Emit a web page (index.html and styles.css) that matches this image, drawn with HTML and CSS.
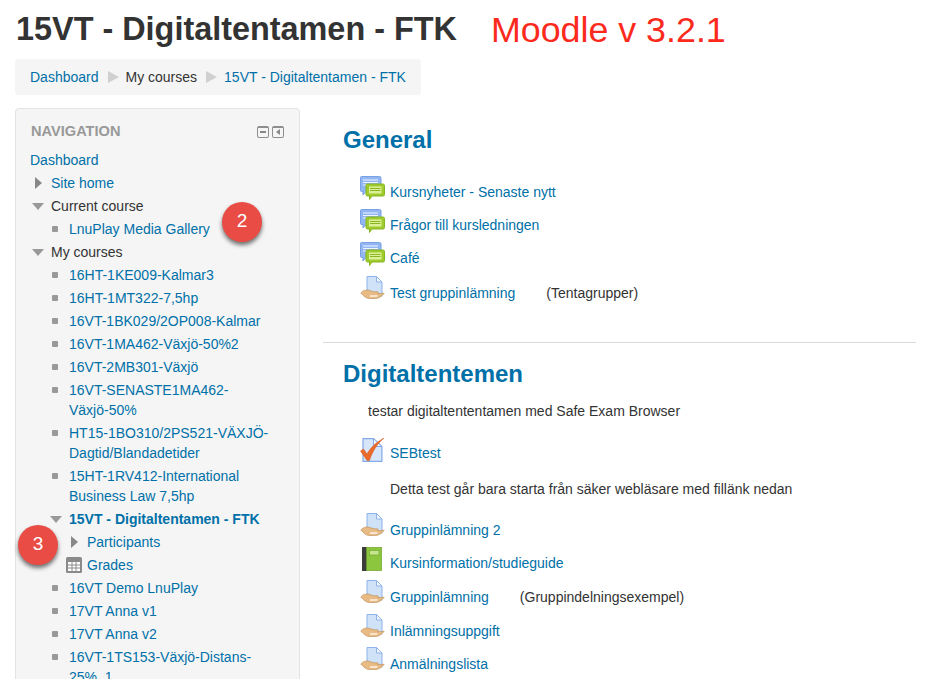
FILE: index.html
```html
<!DOCTYPE html>
<html lang="sv">
<head>
<meta charset="utf-8">
<title>15VT - Digitaltentamen - FTK</title>
<link rel="stylesheet" href="styles.css">
</head>
<body>
<svg class="defs" width="0" height="0" aria-hidden="true">
  <symbol id="i-forum" viewBox="0 0 25 24">
    <path d="M1.500.5h18a1.500 1.500 0 0 1 1.500 1.500v12a1.500 1.500 0 0 1-1.500 1.500H6l-3 3.500v-3.500H1.500A1 1 0 0 1 .5 14.500V1.500A1 1 0 0 1 1.500.5z" fill="#92b6f2" stroke="#7aa0e6"/>
    <path d="M3 4h15M3 6.500h15M3 9h15" stroke="#eef4ff" stroke-width="1.200"/>
    <path d="M7.500 8h15.500a1.500 1.500 0 0 1 1.500 1.500v9a1.500 1.500 0 0 1-1.500 1.500H12l-2.500 3.500V20h-2A1.500 1.500 0 0 1 6 18.500v-9A1.500 1.500 0 0 1 7.500 8z" fill="#9fcc2c" stroke="#86b522"/>
    <rect x="9" y="10.500" width="12.500" height="7" fill="#dcf09a"/>
    <path d="M10 12.500h10.500M10 14.500h10.500" stroke="#8ab51f"/>
  </symbol>
  <symbol id="i-assign" viewBox="0 0 24 24">
    <path d="M6.500.5H16l5.500 5.500v14h-15z" fill="#cfe2f8" stroke="#8fb2ea"/>
    <path d="M16 .5V6h5.500z" fill="#f4f8ff" stroke="#8fb2ea"/>
    <path d="M.3 17c2-2.500 5-3.500 8-2.800 2.500.6 4.500 1.600 6.500 1.600h2.200c.9 0 1 1.500.2 1.900 2.200 0 4.500-.3 6.500-.5-1.800 2.300-5 5.300-8.700 5.300H8.500c-2.800 0-5.600-2.700-8.200-5.500z" fill="#e8bb84" stroke="#bb8a50" stroke-width=".6"/>
    <path d="M9.500 20h7.500" stroke="#fff" stroke-width="1.200"/>
  </symbol>
  <symbol id="i-quiz" viewBox="0 0 24 24">
    <path d="M2.500.6H13l8.400 7.900v14.900H2.500z" fill="#d7e6fa" stroke="#83a9e6" stroke-width="1.200"/>
    <path d="M13 .6v7.900h8.400z" fill="#f2f7ff" stroke="#83a9e6"/>
    <path d="M0 13l3-2 3.500 5C10 9.500 15.500 4.500 23.500 0 17 5.500 12 13 9 22.500H6.500z" fill="#ea6a2a" stroke="#d9551a" stroke-width=".5"/>
  </symbol>
  <symbol id="i-book" viewBox="0 0 20 24">
    <rect x="0" y="0" width="5" height="24" fill="#3c3c38"/>
    <rect x="4.500" y=".3" width="15.200" height="23.400" fill="#8cc63f" stroke="#6f9e2c" stroke-width=".6"/>
    <rect x="7.500" y="3.500" width="9.500" height="4.500" fill="#c4e58a" stroke="#6f9e2c" stroke-width=".6"/>
  </symbol>
  <symbol id="i-grades" viewBox="0 0 16 16">
    <rect width="16" height="16" rx="1.500" fill="#8a8a8a"/>
    <path d="M2 5h12v9H2z" fill="#fff"/>
    <path d="M2 8h12M2 11h12M6 5v9M10 5v9" stroke="#8a8a8a"/>
  </symbol>
</svg>

<div class="page">
  <header class="page-head">
    <h1 class="page-title">15VT - Digitaltentamen - FTK</h1>
    <span class="version-note">Moodle v 3.2.1</span>
  </header>

  <nav class="breadcrumb">
    <a href="#">Dashboard</a><span class="crumb-sep"></span>
    <span>My courses</span><span class="crumb-sep"></span>
    <a href="#">15VT - Digitaltentamen - FTK</a>
  </nav>

  <div class="columns">
    <aside class="block">
      <div class="block-head">
        <h2 class="block-title">NAVIGATION</h2>
        <div class="block-tools">
          <span class="tool"><span class="tool-minus"></span></span>
          <span class="tool"><span class="tool-arrow"></span></span>
        </div>
      </div>
      <ul class="tree">
        <li class="row"><a href="#">Dashboard</a></li>
        <li class="row lvl1"><span class="tw closed"></span><a href="#">Site home</a></li>
        <li class="row lvl1"><span class="tw open"></span>Current course</li>
        <li class="row lvl2"><span class="dot"></span><a href="#">LnuPlay Media Gallery</a>
          <span class="badge badge-two">2</span></li>
        <li class="row lvl1"><span class="tw open"></span>My courses</li>
        <li class="row lvl2"><span class="dot"></span><a href="#">16HT-1KE009-Kalmar3</a></li>
        <li class="row lvl2"><span class="dot"></span><a href="#">16HT-1MT322-7,5hp</a></li>
        <li class="row lvl2"><span class="dot"></span><a href="#">16VT-1BK029/2OP008-Kalmar</a></li>
        <li class="row lvl2"><span class="dot"></span><a href="#">16VT-1MA462-Växjö-50%2</a></li>
        <li class="row lvl2"><span class="dot"></span><a href="#">16VT-2MB301-Växjö</a></li>
        <li class="row lvl2"><span class="dot"></span><a href="#">16VT-SENASTE1MA462-<br>Växjö-50%</a></li>
        <li class="row lvl2"><span class="dot"></span><a href="#">HT15-1BO310/2PS521-VÄXJÖ-<br>Dagtid/Blandadetider</a></li>
        <li class="row lvl2"><span class="dot"></span><a href="#">15HT-1RV412-International<br>Business Law 7,5hp</a></li>
        <li class="row lvl2 current"><span class="tw open"></span><a href="#">15VT - Digitaltentamen - FTK</a>
          <span class="badge badge-three">3</span></li>
        <li class="row lvl3"><span class="tw closed"></span><a href="#">Participants</a></li>
        <li class="row lvl3"><svg class="grade-icon"><use href="#i-grades"/></svg><a href="#">Grades</a></li>
        <li class="row lvl2"><span class="dot"></span><a href="#">16VT Demo LnuPlay</a></li>
        <li class="row lvl2"><span class="dot"></span><a href="#">17VT Anna v1</a></li>
        <li class="row lvl2"><span class="dot"></span><a href="#">17VT Anna v2</a></li>
        <li class="row lvl2"><span class="dot"></span><a href="#">16VT-1TS153-Växjö-Distans-<br>25%_1</a></li>
      </ul>
    </aside>

    <main class="content">
      <section class="topic topic-general">
        <h2 class="topic-title">General</h2>
        <ul class="activities">
          <li class="act h33"><svg class="act-icon"><use href="#i-forum"/></svg><a href="#">Kursnyheter - Senaste nytt</a></li>
          <li class="act h33"><svg class="act-icon"><use href="#i-forum"/></svg><a href="#">Frågor till kursledningen</a></li>
          <li class="act h33"><svg class="act-icon"><use href="#i-forum"/></svg><a href="#">Café</a></li>
          <li class="act h37"><svg class="act-icon assign"><use href="#i-assign"/></svg><a href="#">Test gruppinlämning</a><span class="note">(Tentagrupper)</span></li>
        </ul>
      </section>

      <section class="topic topic-digital">
        <h2 class="topic-title">Digitaltentemen</h2>
        <p class="summary">testar digitaltententamen med Safe Exam Browser</p>
        <ul class="activities">
          <li class="act seb"><svg class="act-icon quiz"><use href="#i-quiz"/></svg><a href="#">SEBtest</a></li>
          <li class="act-desc">Detta test går bara starta från säker webläsare med fillänk nedan</li>
          <li class="act h33"><svg class="act-icon assign"><use href="#i-assign"/></svg><a href="#">Gruppinlämning 2</a></li>
          <li class="act h33"><svg class="act-icon book"><use href="#i-book"/></svg><a href="#">Kursinformation/studieguide</a></li>
          <li class="act h35"><svg class="act-icon assign"><use href="#i-assign"/></svg><a href="#">Gruppinlämning</a><span class="note">(Gruppindelningsexempel)</span></li>
          <li class="act h33"><svg class="act-icon assign"><use href="#i-assign"/></svg><a href="#">Inlämningsuppgift</a></li>
          <li class="act h33"><svg class="act-icon assign"><use href="#i-assign"/></svg><a href="#">Anmälningslista</a></li>
        </ul>
      </section>
    </main>
  </div>
</div>
</body>
</html>
```

FILE: styles.css
```css
html, body {
  margin: 0;
  padding: 0;
  height: 679px;
  overflow: hidden;
  background: #fff;
}

body {
  font-family: "Liberation Sans", Arial, sans-serif;
  font-size: 14px;
  line-height: 20px;
  color: #333;
}

a {
  color: #0070a8;
  text-decoration: none;
}

ul {
  list-style: none;
  margin: 0;
  padding: 0;
}

.defs {
  position: absolute;
}

.page {
  padding: 0 31px 0 15px;
}

/* Header */
.page-head {
  display: flex;
  align-items: center;
  height: 59px;
}

.page-title {
  margin: 0 0 0 1px;
  font-size: 32.4px;
  line-height: 59px;
  font-weight: 700;
  color: #333;
  white-space: nowrap;
}

.version-note {
  margin: 2px 0 0 34px;
  font-size: 35.8px;
  line-height: 59px;
  color: #fb2a1c;
  white-space: nowrap;
}

/* Breadcrumb */
.breadcrumb {
  display: flex;
  align-items: center;
  box-sizing: border-box;
  width: 406px;
  height: 36px;
  padding: 0 15px;
  border-radius: 4px;
  background: #f5f5f5;
  white-space: nowrap;
}

.crumb-sep {
  flex: none;
  width: 0;
  height: 0;
  margin: 0 7px 0 9px;
  border-left: 11px solid #d0d0d0;
  border-top: 6px solid transparent;
  border-bottom: 6px solid transparent;
}

.columns {
  display: flex;
  margin-top: 13px;
}

/* Navigation block */
.block {
  box-sizing: border-box;
  flex: none;
  width: 285px;
  height: 640px;
  padding: 11px 14px;
  border: 1px solid #e3e3e3;
  border-radius: 4px;
  background: #f5f5f5;
}

.block-head {
  display: flex;
  align-items: center;
  justify-content: space-between;
  height: 21px;
  margin-bottom: 9px;
  padding-left: 1px;
}

.block-title {
  margin: 0;
  font-size: 14.6px;
  line-height: 20px;
  font-weight: 700;
  color: #999;
}

.block-tools {
  display: flex;
  gap: 3px;
  margin: 2px 1px 0 0;
}

.tool {
  display: flex;
  align-items: center;
  justify-content: center;
  box-sizing: border-box;
  width: 12px;
  height: 12px;
  border: 1px solid #8e8e8e;
  border-top-width: 2px;
  border-radius: 2px;
  background: #f5f5f5;
}

.tool-minus {
  width: 6px;
  height: 2px;
  background: #888;
}

.tool-arrow {
  width: 0;
  height: 0;
  border-right: 4px solid #888;
  border-top: 3px solid transparent;
  border-bottom: 3px solid transparent;
}

/* Tree */
.row {
  position: relative;
  padding-bottom: 3px;
  color: #333;
}

.lvl1 {
  padding-left: 21px;
}

.lvl2 {
  padding-left: 39px;
}

.lvl3 {
  padding-left: 57px;
}

.current a {
  font-weight: 700;
}

.tw {
  position: absolute;
  width: 0;
  height: 0;
}

.tw.closed {
  top: 4px;
  margin-left: -16px;
  border-left: 7px solid #888;
  border-top: 6px solid transparent;
  border-bottom: 6px solid transparent;
}

.tw.open {
  top: 7px;
  margin-left: -19px;
  border-top: 7px solid #999;
  border-left: 6px solid transparent;
  border-right: 6px solid transparent;
}

.dot {
  position: absolute;
  top: 7px;
  margin-left: -17px;
  width: 6px;
  height: 6px;
  border-radius: 1px;
  background: #999;
}

.grade-icon {
  position: absolute;
  top: 2px;
  margin-left: -21px;
  width: 16px;
  height: 16px;
}

/* Numbered callouts lie over the tree */
.badge {
  position: absolute;
  width: 40px;
  height: 40px;
  border-radius: 50%;
  background: #e84c45;
  box-shadow: 0 3px 4px rgba(0, 0, 0, .55);
  color: #fff;
  font-size: 19px;
  line-height: 38px;
  font-weight: 400;
  text-align: center;
}

.badge-two {
  left: 192px;
  top: -17px;
}

.badge-three {
  left: -12px;
  top: 16px;
}

/* Main content */
.content {
  flex: 1;
  margin-left: 23px;
}

.topic-title {
  margin: 0;
  padding-left: 20px;
  font-size: 24px;
  line-height: 30px;
  font-weight: 700;
  color: #0070a8;
}

.topic-general {
  box-sizing: border-box;
  height: 235px;
  padding-top: 17px;
  border-bottom: 1px solid #d9d9d9;
}

.topic-general .activities {
  margin-top: 20px;
}

.topic-digital {
  padding-top: 16px;
}

.summary {
  margin: 12px 0 0 45px;
  color: #333;
}

.activities {
  padding-left: 37px;
}

.topic-digital .activities {
  margin-top: 12px;
}

.act {
  display: flex;
  align-items: center;
}

.h33 {
  height: 33px;
}

.h35 {
  height: 35px;
}

.h37 {
  height: 37px;
}

.seb {
  height: 40px;
}

.act-desc {
  box-sizing: border-box;
  height: 40px;
  padding: 6px 0 0 30px;
}

.act-icon {
  flex: none;
  width: 25px;
  height: 24px;
  margin: -8px 5px 0 0;
}

.act-icon.assign {
  margin-top: -10px;
}

.act-icon.quiz {
  margin-top: -6px;
}

.act-icon.book {
  width: 20px;
  margin: -8px 8px 0 2px;
}

.note {
  margin-left: 31px;
  color: #333;
}
```
